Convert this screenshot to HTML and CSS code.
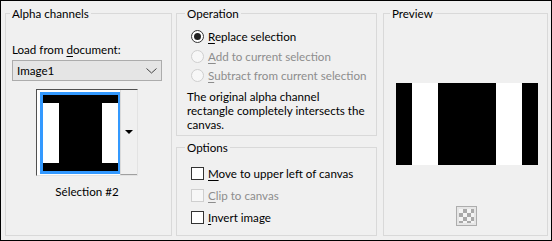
FILE: index.html
```html
<!DOCTYPE html>
<html lang="fr">
<head>
  <meta charset="UTF-8">
  <title>Load Selection From Alpha Channel</title>
  <link rel="stylesheet" href="styles.css">
</head>
<body>
  <div class="dialog">

    <fieldset class="group alpha">
      <legend>Alpha channels</legend>
      <div class="field-label">Load from <u>d</u>ocument:</div>
      <div class="select">
        <span>Image1</span>
        <svg width="11" height="6" viewBox="0 0 11 6"><polyline points="0.5,0.5 5.5,5 10.5,0.5" fill="none" stroke="#444" stroke-width="1"/></svg>
      </div>
      <div class="thumb-frame">
        <div class="thumb-list">
          <div class="thumb-sel"><div class="thumb-img"></div></div>
        </div>
        <div class="thumb-btn"><span class="tri"></span></div>
      </div>
      <div class="thumb-caption">Sélection #2</div>
    </fieldset>

    <div class="middle">
      <fieldset class="group operation">
        <legend>Operation</legend>
        <div class="row"><span class="radio checked"></span><span><u>R</u>eplace selection</span></div>
        <div class="row disabled"><span class="radio"></span><span><u>A</u>dd to current selection</span></div>
        <div class="row disabled"><span class="radio"></span><span><u>S</u>ubtract from current selection</span></div>
        <p class="desc">The original alpha channel<br>rectangle completely intersects the<br>canvas.</p>
      </fieldset>

      <fieldset class="group options">
        <legend>Options</legend>
        <div class="row tall"><span class="check"></span><span><u>M</u>ove to upper left of canvas</span></div>
        <div class="row tall disabled"><span class="check"></span><span><u>C</u>lip to canvas</span></div>
        <div class="row tall"><span class="check"></span><span><u>I</u>nvert image</span></div>
      </fieldset>
    </div>

    <fieldset class="group preview">
      <legend>Preview</legend>
      <div class="preview-img"></div>
      <div class="checker-btn"><div class="checker"></div></div>
    </fieldset>

  </div>
</body>
</html>
```

FILE: styles.css
```css
body { margin: 0; font-family: Lato, "Noto Sans", sans-serif; font-size: 11.6px; color: #000; }
u { text-decoration: underline; text-underline-offset: 2px; }

.dialog { width: 552px; height: 241px; box-sizing: border-box; border: 1px solid #000; background: #f0f0f0; padding: 5px 3px 4px 4px; display: flex; }

.group { margin: 0; min-width: 0; height: 230px; box-sizing: border-box; border: 1px solid #d9d9d9; }
.group legend { padding: 0 2px; margin-left: -2px; line-height: 15px; }

/* alpha channels */
.alpha { width: 167px; padding: 21px 6px 0 6px; }
.field-label { line-height: 15px; }
.select { margin-top: 3px; width: 150px; height: 21px; box-sizing: border-box; border: 1px solid #acacac; background: #e5e5e5; display: flex; align-items: center; justify-content: space-between; padding: 0 4px 0 4px; }
.select svg { display: block; }
.thumb-frame { margin: 8px 0 0 24px; width: 102px; height: 87px; box-sizing: border-box; border: 1px solid; border-color: #505050 #e3e3e3 #e3e3e3 #505050; background: #fff; display: flex; }
.thumb-list { width: 83px; padding: 2px 0 0 3px; box-sizing: border-box; }
.thumb-sel { width: 75px; border: 3px solid #3399ff; }
.thumb-img { width: 75px; height: 76px; background-color: #000; background-image: linear-gradient(to right, #fff 16px, transparent 16px 59px, #fff 59px); background-size: 75px 60px; background-position: 0 8px; background-repeat: no-repeat; }
.thumb-btn { width: 17px; box-sizing: border-box; border-left: 1px solid #dadada; border-bottom: 1px solid #a0a0a0; background: #f0f0f0; display: flex; align-items: center; justify-content: center; }
.tri { width: 0; height: 0; border-left: 4px solid transparent; border-right: 4px solid transparent; border-top: 4px solid #000; }
.thumb-caption { margin: 8px 0 0 24px; width: 102px; text-align: center; line-height: 15px; }

/* operation + options */
.middle { width: 201px; margin: 0 6px 0 4px; display: flex; flex-direction: column; gap: 4px; }
.operation { width: 201px; height: 130px; padding: 6px 8px 0 10px; }
.options { width: 201px; height: 96px; padding: 7px 8px 0 10px; }
.row { display: flex; align-items: center; height: 19.5px; padding-left: 4px; white-space: nowrap; }
.row.tall { height: 22px; }
.row.disabled { color: #8d8d8d; }
.radio { width: 13px; height: 13px; box-sizing: border-box; margin-right: 4px; border: 1px solid #333; border-radius: 50%; background: #fff; display: flex; align-items: center; justify-content: center; flex: none; }
.radio.checked::after { content: ""; width: 7px; height: 7px; border-radius: 50%; background: #222; }
.row.disabled .radio { border-color: #cfcfcf; background: #f7f7f7; }
.check { width: 13px; height: 13px; box-sizing: border-box; margin-right: 4px; border: 1px solid #333; background: #fff; flex: none; }
.row.disabled .check { border-color: #cfcfcf; background: #f7f7f7; }
.desc { margin: 4px 0 0; line-height: 14px; white-space: nowrap; }

/* preview */
.preview { width: 165px; padding: 62px 6px 0 8px; }
.preview-img { width: 142px; height: 82px; margin: 0 auto; background: linear-gradient(to right, #000 16px, #fff 16px 42px, #000 42px 100px, #fff 100px 126px, #000 126px); }
.checker-btn { width: 21px; height: 20px; box-sizing: border-box; margin: 41px auto 0; border: 1px solid #adadad; background: #e6e6e6; padding: 2px; }
.checker { width: 15px; height: 14px; background: conic-gradient(#a9a9a9 25%, #f4f4f4 0 50%, #a9a9a9 0 75%, #f4f4f4 0) 0 0 / 8px 8px; }
```
